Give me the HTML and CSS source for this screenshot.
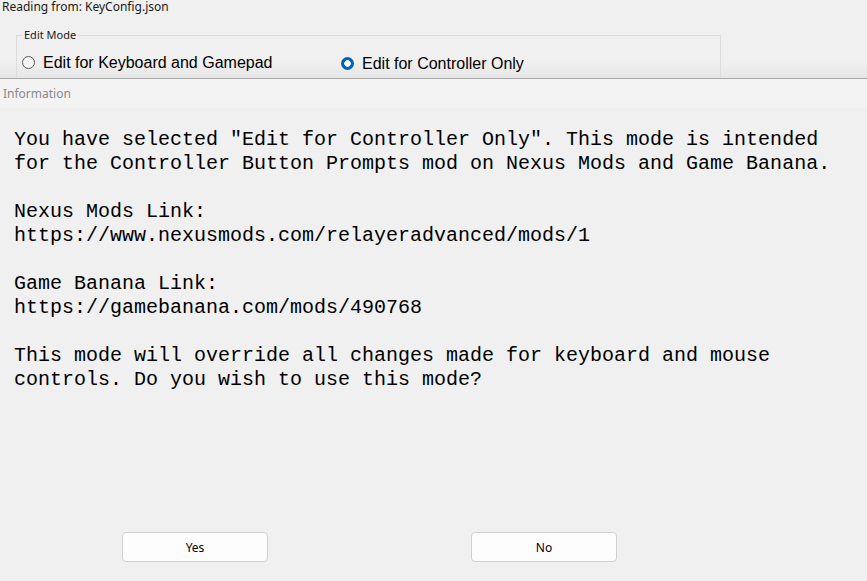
FILE: index.html
```html
<!DOCTYPE html>
<html>
<head>
<meta charset="utf-8">
<link rel="stylesheet" href="styles.css">
</head>
<body>
<div class="app">
  <div class="top">
    <div class="source">Reading from: KeyConfig.json</div>
    <fieldset class="group">
      <legend>Edit Mode</legend>
      <div class="radios">
        <label class="radio"><span class="dot"></span>Edit for Keyboard and Gamepad</label>
        <label class="radio radio-second"><span class="dot checked"></span>Edit for Controller Only</label>
      </div>
    </fieldset>
  </div>
  <div class="dialog">
    <div class="titlebar">Information</div>
    <div class="message">You have selected "Edit for Controller Only". This mode is intended
for the Controller Button Prompts mod on Nexus Mods and Game Banana.

Nexus Mods Link:
https://www.nexusmods.com/relayeradvanced/mods/1

Game Banana Link:
https://gamebanana.com/mods/490768

This mode will override all changes made for keyboard and mouse
controls. Do you wish to use this mode?</div>
    <div class="buttons">
      <button class="btn">Yes</button>
      <button class="btn">No</button>
    </div>
  </div>
</div>
</body>
</html>
```
FILE: styles.css
```css
html, body {
  margin: 0;
  padding: 0;
}
body {
  width: 867px;
  height: 581px;
  overflow: hidden;
  background: #f0f0f0;
  font-family: "Noto Sans", "Open Sans", sans-serif;
}
.app {
  display: flex;
  flex-direction: column;
  height: 581px;
}
.top {
  height: 78px;
  overflow: hidden;
  background: linear-gradient(#f0f0f0 0, #f0f0f0 62px, #e6e6e6 78px);
  flex: none;
}
.source {
  font-size: 12px;
  line-height: 14px;
  color: #1a1a1a;
  padding-left: 2px;
}
.group {
  margin: 14px 0 0 16px;
  padding: 0 0 20px 5px;
  width: 705px;
  box-sizing: border-box;
  border: 1px solid #dcdcdc;
  min-width: 0;
}
.group legend {
  font-size: 11px;
  line-height: 14px;
  color: #1a1a1a;
  padding: 0 2px;
}
.radios {
  display: grid;
  grid-template-columns: 319px auto;
  margin-top: 10px;
  font-family: "Liberation Sans", Arial, sans-serif;
  font-size: 16px;
  line-height: 20px;
  color: #000;
}
.radio {
  display: flex;
  align-items: center;
  gap: 8px;
}
.radio-second {
  padding-top: 2px;
}
.dot {
  width: 13px;
  height: 13px;
  box-sizing: border-box;
  border-radius: 50%;
  border: 1px solid #5a5a5a;
  background: #f5f5f5;
  flex: none;
  margin-top: -1px;
}
.dot.checked {
  border: none;
  background: radial-gradient(circle, #ffffff 0, #ffffff 3px, #0063b8 3.6px, #0063b8 100%);
}
.dialog {
  flex: 1;
  display: flex;
  flex-direction: column;
  border-top: 1px solid #a9a9a9;
  background: #f0f0f0;
}
.titlebar {
  height: 29px;
  background: #f3f3f3;
  color: #8a8a8a;
  font-size: 12px;
  line-height: 29px;
  padding-left: 3px;
  box-sizing: border-box;
}
.message {
  white-space: pre;
  font-family: "Liberation Mono", "DejaVu Sans Mono", monospace;
  font-size: 20px;
  line-height: 24px;
  color: #000;
  padding: 20px 0 0 14px;
}
.buttons {
  margin-top: auto;
  display: flex;
  gap: 203px;
  padding: 0 0 19px 122px;
}
.btn {
  width: 146px;
  height: 30px;
  box-sizing: border-box;
  border: 1px solid #d0d0d0;
  border-radius: 4px;
  background: #fdfdfd;
  font-family: "Noto Sans", "Open Sans", sans-serif;
  font-size: 12px;
  color: #000;
  padding: 0;
}
```
